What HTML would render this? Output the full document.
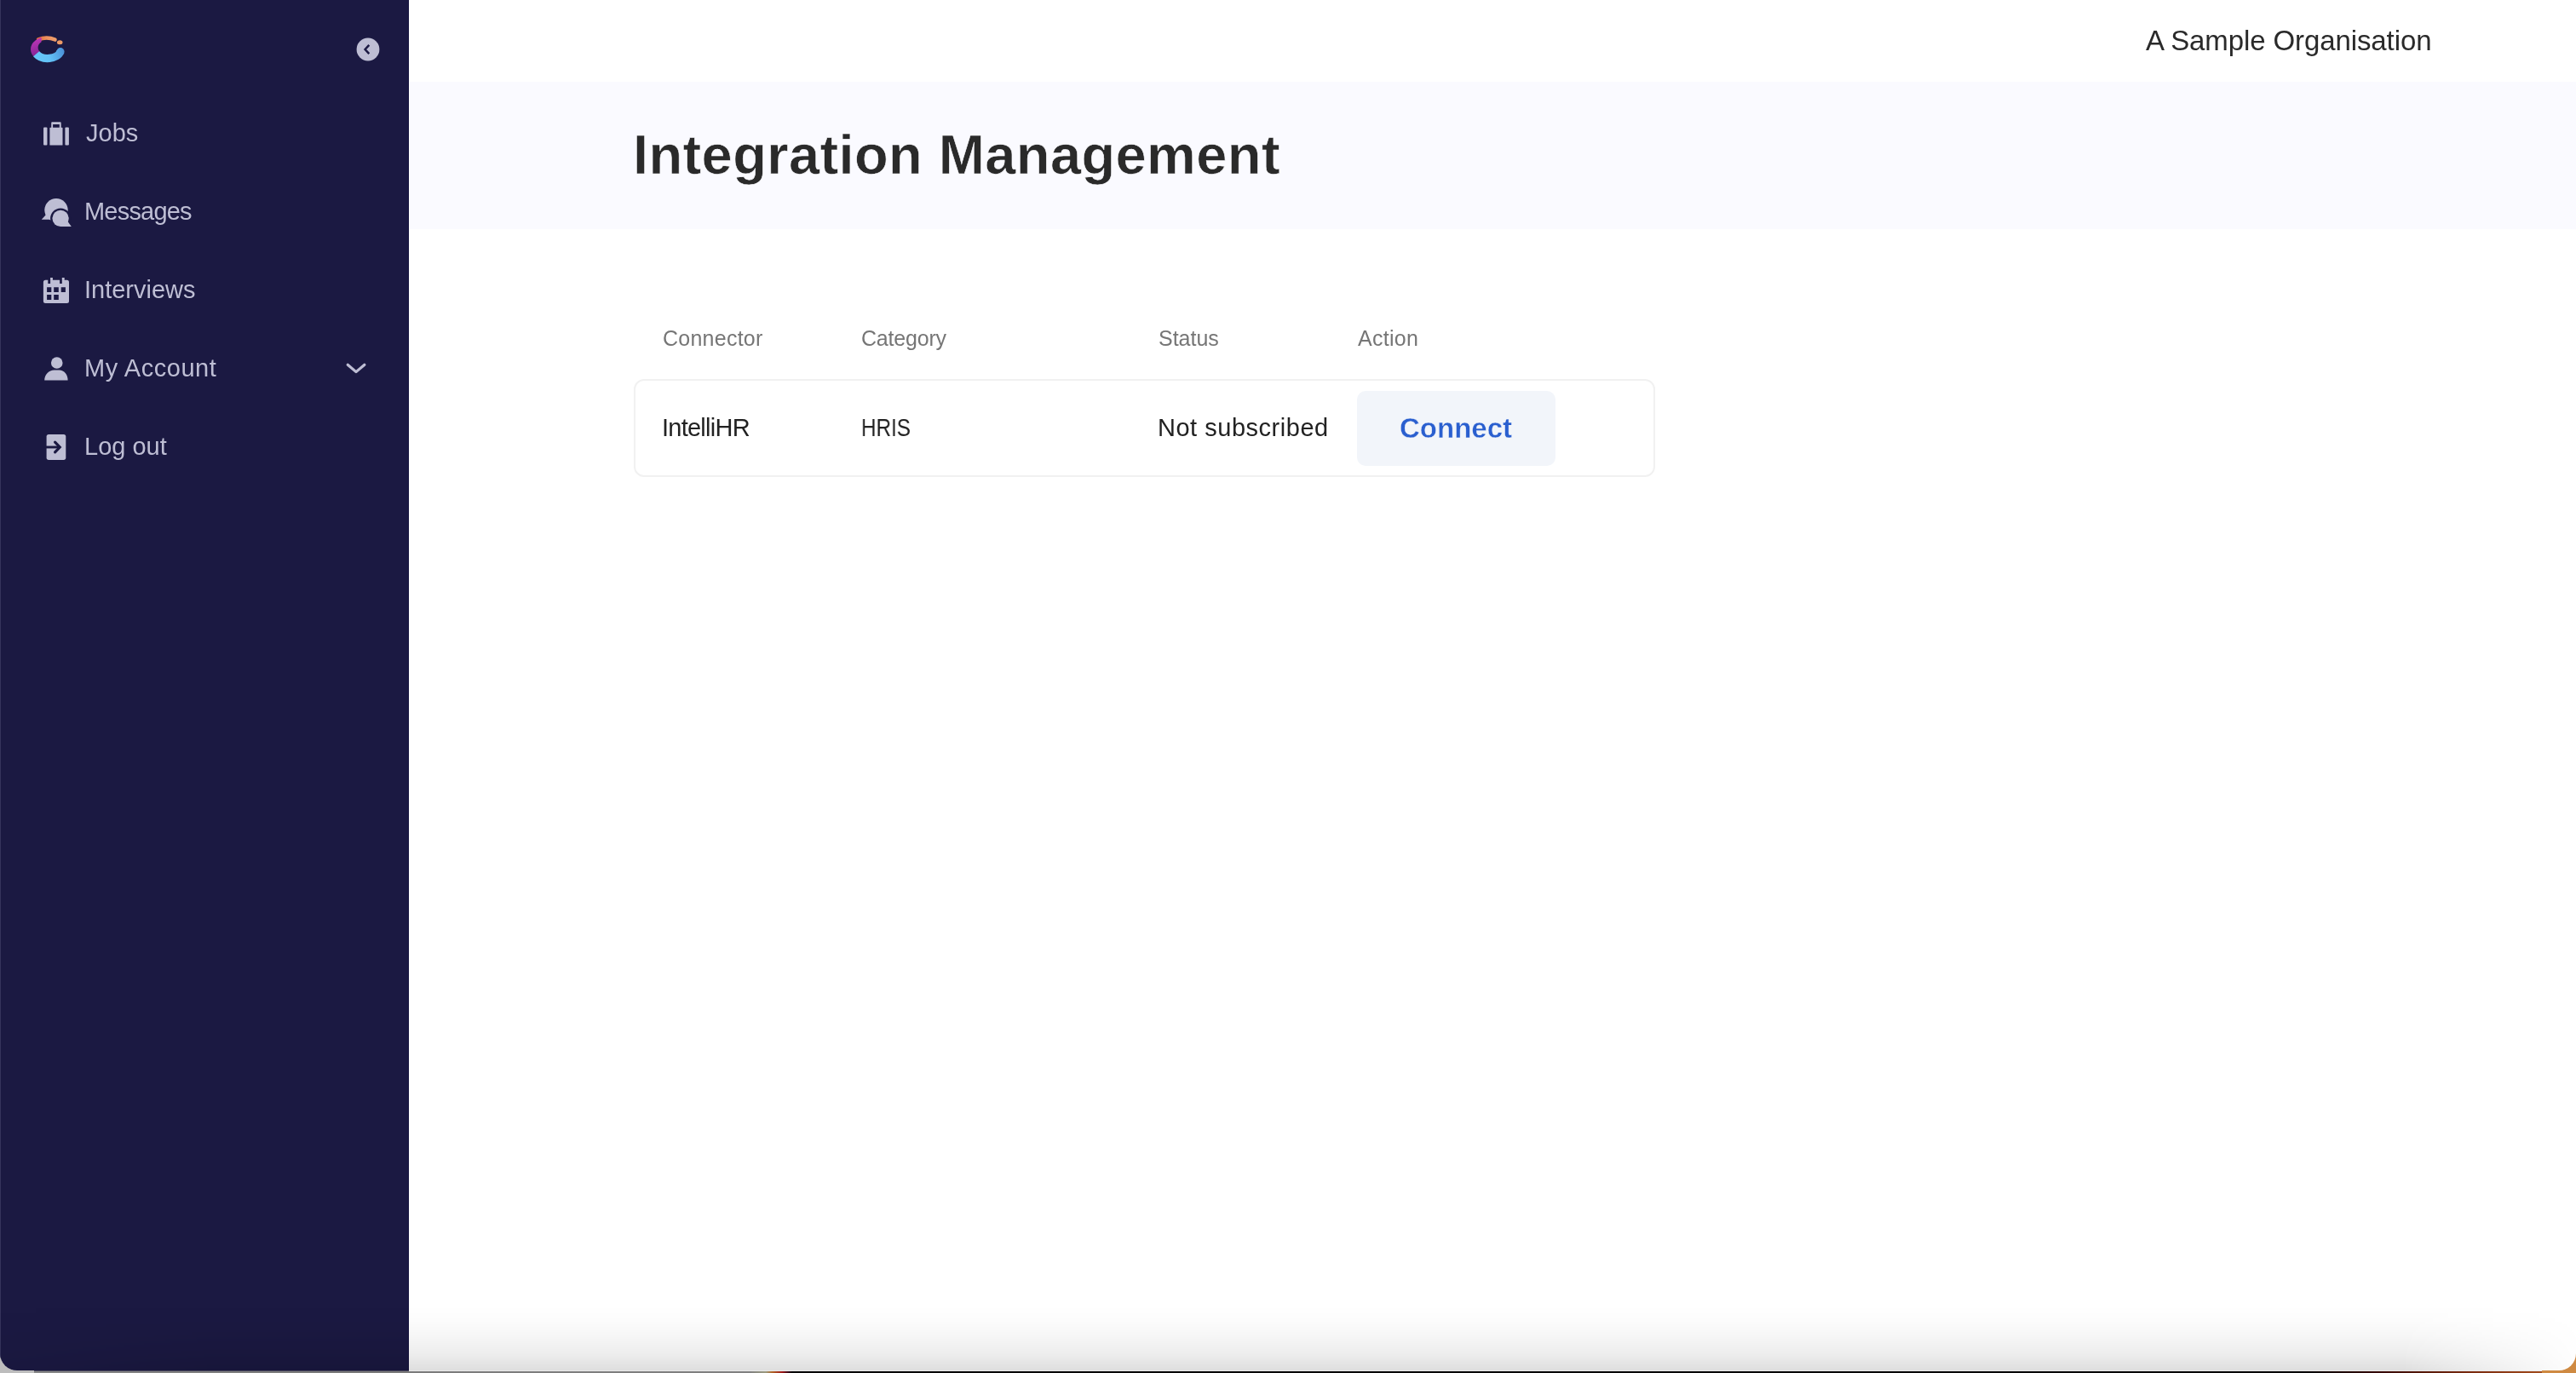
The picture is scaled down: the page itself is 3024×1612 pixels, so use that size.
<!DOCTYPE html>
<html>
<head>
<meta charset="utf-8">
<style>
html,body{margin:0;padding:0;}
body{width:3024px;height:1612px;overflow:hidden;position:relative;font-family:"Liberation Sans",sans-serif;background:#000;}
.strip{position:absolute;left:0;right:0;top:1610px;height:2px;
  background:linear-gradient(90deg,#8a8a8a 0,#7a7a7a 400px,#808080 880px,#9a9a80 899px,#b06a2a 906px,#a01818 918px,#300818 926px,#000 930px,#000 2700px,#3a0a04 2800px,#7a2a0e 2900px,#a04a1c 2980px,#c07838 3024px);}
.hl{position:absolute;left:480px;right:20px;top:1609px;height:1px;background:#e9e9e9;}
.hl2{position:absolute;left:20px;width:460px;top:1609px;height:1px;background:#4a495e;}
.cornerL{position:absolute;left:0;top:1570px;width:40px;height:42px;background:#bdbdbd;}
.cornerR{position:absolute;right:0;top:1570px;width:40px;height:42px;background:#cf8a42;}
.win{position:absolute;left:0;top:0;width:3024px;height:1609px;background:#fff;overflow:hidden;
  border-bottom-left-radius:20px;border-bottom-right-radius:20px;}
.side{position:absolute;left:0;top:0;width:479px;height:1609px;background:#1b1942;border-right:1px solid #13113d;}
.side .edge{position:absolute;left:0;top:0;width:1px;height:100%;background:#35335b;}
.txt{position:absolute;white-space:nowrap;line-height:1;will-change:transform;}
.nav{color:#bebed4;font-size:29px;}
.band{position:absolute;left:481px;top:96px;right:0;height:173px;background:#fafaff;}
.hdr{color:#767676;font-size:25px;}
.row{color:#222;font-size:29px;}
.card{position:absolute;left:744px;top:445px;width:1195px;height:111px;border:2px solid #f1f1f1;border-radius:12px;}
.btn{position:absolute;left:1593px;top:459px;width:233px;height:88px;background:#f2f5fa;border-radius:10px;}
.shade{position:absolute;left:0;right:0;bottom:0;height:80px;background:linear-gradient(180deg,rgba(0,0,0,0) 5%,rgba(0,0,0,0.012) 27%,rgba(0,0,0,0.035) 50%,rgba(0,0,0,0.07) 76%,rgba(0,0,0,0.13) 100%);
  -webkit-mask-image:linear-gradient(90deg,rgba(0,0,0,0.4) 0,#000 250px,#000 2820px,rgba(0,0,0,0.05) 3024px);}
svg{position:absolute;}
</style>
</head>
<body>
<div class="strip"></div><div class="hl"></div><div class="hl2"></div><div class="cornerL"></div><div class="cornerR"></div>
<div class="win">
  <div class="side">
    <div class="edge"></div>
  </div>
  <div class="band"></div>
  <div class="card"></div>
  <div class="btn"></div>

  <!-- logo -->
  <svg style="left:32px;top:38px" width="48" height="40" viewBox="0 0 48 40">
    <defs>
      <linearGradient id="gb" gradientUnits="userSpaceOnUse" x1="10" y1="30" x2="44" y2="20"><stop offset="0" stop-color="#66c8fa"/><stop offset="0.45" stop-color="#62c0f6"/><stop offset="1" stop-color="#4a8ed6"/></linearGradient>
      <linearGradient id="gp" gradientUnits="userSpaceOnUse" x1="6" y1="10" x2="12" y2="30"><stop offset="0" stop-color="#b834b4"/><stop offset="1" stop-color="#7c2490"/></linearGradient>
      <linearGradient id="go" gradientUnits="userSpaceOnUse" x1="12" y1="0" x2="34" y2="0"><stop offset="0" stop-color="#de6c38"/><stop offset="0.5" stop-color="#ec9160"/><stop offset="1" stop-color="#f0a06c"/></linearGradient>
      <clipPath id="cp"><polygon points="0,0 16.6,0 16.6,12 23,18 9,29 0,34"/></clipPath>
    </defs>
    <path d="M13 8.4 Q23 4.4 32.6 8.6" stroke="url(#go)" stroke-width="4.4" fill="none" stroke-linecap="round"/>
    <path clip-path="url(#cp)" fill="url(#gp)" fill-rule="evenodd" d="M4 19.9 a20 15.1 0 1 0 40 0 a20 15.1 0 1 0 -40 0 Z M12.6 17.8 a11.3 8.6 0 1 0 22.6 0 a11.3 8.6 0 1 0 -22.6 0 Z"/>
    <ellipse cx="38.2" cy="11.7" rx="3.3" ry="2.5" fill="#ee9a66"/>
    <path d="M38.97 22.64 A15.5 10.6 0 0 1 10.58 25.2" stroke="url(#gb)" stroke-width="9.2" fill="none" stroke-linecap="butt"/>
    <circle cx="38.97" cy="22.64" r="4.6" fill="url(#gb)"/>
  </svg>

  <!-- collapse button -->
  <svg style="left:418px;top:44px" width="28" height="28" viewBox="0 0 28 28">
    <circle cx="14" cy="14" r="13.4" fill="#bebed4"/>
    <path d="M15.3 8.9 L10.6 14 L15.3 19.1" stroke="#1b1942" stroke-width="2.5" fill="none" stroke-linecap="butt"/>
  </svg>

  <!-- icons -->
  <svg style="left:44px;top:136px" width="44" height="44" viewBox="0 0 44 44" fill="#bebed4">
    <rect x="7.05" y="13.5" width="4.4" height="21" rx="1"/>
    <rect x="14.4" y="13.8" width="15.1" height="20.7" rx="0.6"/>
    <path fill-rule="evenodd" d="M17.2 7.2 h9.5 a1 1 0 0 1 1 1 V14 h-1.9 V10.1 h-7.7 V14 h-1.9 V8.2 a1 1 0 0 1 1 -1 Z"/>
    <rect x="32.4" y="13.5" width="4.5" height="21" rx="1"/>
  </svg>
  <svg style="left:44px;top:228px" width="44" height="44" viewBox="0 0 44 44" fill="#bebed4">
    <circle cx="22" cy="18.6" r="13.7"/>
    <path d="M4.8 29.8 L9.8 24.2 L15 26 L15 29.8 Z"/>
    <circle cx="27.1" cy="28.4" r="12" fill="#1b1942"/>
    <circle cx="27.1" cy="28.4" r="9.6"/>
    <path d="M27 38 L39.8 38 L34.8 31 L30 34 Z"/>
  </svg>
  <svg style="left:44px;top:320px" width="44" height="44" viewBox="0 0 44 44">
    <path fill="#bebed4" fill-rule="evenodd" d="M9.4 8.8 H12.3 V13.1 H15.1 V5.9 H17.9 V8.8 H26.1 V13.1 H28.8 V5.9 H31.7 V8.8 H34.5 A2.5 2.5 0 0 1 37 11.3 V33.6 A2.5 2.5 0 0 1 34.5 36.1 H9.4 A2.5 2.5 0 0 1 6.9 33.6 V11.3 A2.5 2.5 0 0 1 9.4 8.8 Z
      M11.1 17.3 V23.1 H16.3 V17.3 Z M19.2 17.3 V23.1 H24.8 V17.3 Z M27.7 17.3 V23.1 H32.9 V17.3 Z
      M11.1 26.1 V31.9 H16.3 V26.1 Z M19.2 26.1 V31.9 H24.8 V26.1 Z"/>
  </svg>
  <svg style="left:44px;top:412px" width="44" height="44" viewBox="0 0 44 44" fill="#bebed4">
    <ellipse cx="22.75" cy="14" rx="6.8" ry="6.8"/>
    <path d="M8.2 34.5 C8.2 27.5 13.5 22.4 19.5 22.4 L25.5 22.4 C31.3 22.4 35.6 27.5 35.6 34.5 Z"/>
  </svg>
  <svg style="left:44px;top:504px" width="44" height="44" viewBox="0 0 44 44">
    <rect x="10.6" y="5.9" width="22.7" height="30" rx="2.6" fill="#bebed4"/>
    <path d="M10 21 H26" stroke="#1b1942" stroke-width="2.9" fill="none"/>
    <path d="M20.6 15.2 L26.2 21 L20.6 26.8" stroke="#1b1942" stroke-width="3.2" fill="none" stroke-linecap="round" stroke-linejoin="miter"/>
  </svg>
  <svg style="left:396px;top:412px" width="44" height="44" viewBox="0 0 44 44">
    <path d="M12.2 16.2 L22 24.6 L31.9 16.2" stroke="#bebed4" stroke-width="3.2" fill="none" stroke-linecap="round" stroke-linejoin="round"/>
  </svg>

  <!-- nav -->
  <div class="txt nav" style="left:101px;top:142px">Jobs</div>
  <div class="txt nav" style="left:99px;top:234px;letter-spacing:-0.8px">Messages</div>
  <div class="txt nav" style="left:99px;top:326px">Interviews</div>
  <div class="txt nav" style="left:99px;top:418px;letter-spacing:0.55px">My Account</div>
  <div class="txt nav" style="left:99px;top:510px">Log out</div>

  <div class="txt" style="left:2519px;top:31px;font-size:33px;letter-spacing:-0.1px;color:#2a2a2a">A Sample Organisation</div>
  <div class="txt" style="left:743px;top:149px;font-size:65px;font-weight:bold;letter-spacing:0.4px;color:#2a2a2a;-webkit-text-stroke:0.6px #fafaff">Integration Management</div>

  <div class="txt hdr" style="left:778px;top:385px;letter-spacing:0.25px">Connector</div>
  <div class="txt hdr" style="left:1011px;top:385px;letter-spacing:-0.2px">Category</div>
  <div class="txt hdr" style="left:1360px;top:385px">Status</div>
  <div class="txt hdr" style="left:1594px;top:385px;letter-spacing:0.3px">Action</div>

  <div class="txt row" style="left:777px;top:488px;letter-spacing:-0.75px">IntelliHR</div>
  <div class="txt row" style="left:1011px;top:488px;transform:scaleX(0.835);transform-origin:0 0">HRIS</div>
  <div class="txt row" style="left:1359px;top:488px;letter-spacing:0.52px">Not subscribed</div>
  <div class="txt" style="left:1643px;top:486px;font-size:33px;font-weight:bold;color:#2a5fcf;-webkit-text-stroke:0.4px #f2f5fa">Connect</div>

  <div class="shade"></div>
</div>
</body>
</html>
